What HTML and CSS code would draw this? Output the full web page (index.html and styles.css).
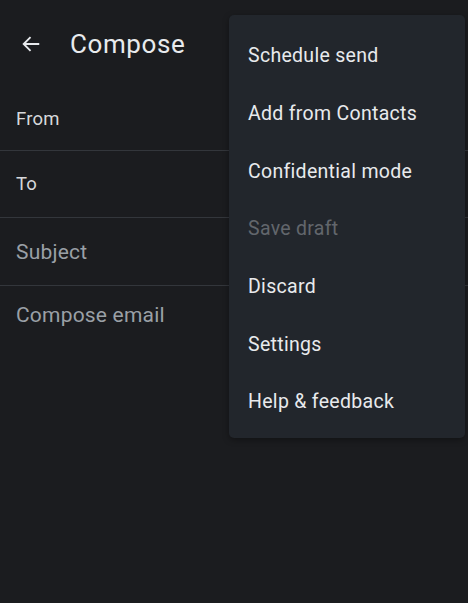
FILE: index.html
```html
<!DOCTYPE html>
<html>
<head>
<meta charset="utf-8">
<link rel="stylesheet" href="styles.css">
</head>
<body>
<div class="screen">
  <header class="topbar">
    <svg class="back" width="22" height="22" viewBox="0 0 24 24"><path d="M21 12H4M11.5 4.5L4 12l7.5 7.5" fill="none" stroke="#e8eaed" stroke-width="2"/></svg>
    <h1 class="title">Compose</h1>
  </header>
  <div class="field from"><span class="label">From</span></div>
  <div class="field to"><span class="label">To</span></div>
  <div class="field subject"><span class="label dim">Subject</span></div>
  <div class="body"><span class="label dim">Compose email</span></div>

  <ul class="menu">
    <li class="item">Schedule send</li>
    <li class="item">Add from Contacts</li>
    <li class="item">Confidential mode</li>
    <li class="item disabled">Save draft</li>
    <li class="item">Discard</li>
    <li class="item">Settings</li>
    <li class="item">Help &amp; feedback</li>
  </ul>
</div>
</body>
</html>
```
FILE: styles.css
```css
* { box-sizing: border-box; }
html, body { margin: 0; padding: 0; background: #1b1c1f; }
body { font-family: Roboto, "Noto Sans", sans-serif; color: #e8eaed; }
.screen { position: relative; width: 468px; height: 603px; overflow: hidden; }
.topbar { height: 88px; display: flex; align-items: center; padding-left: 20px; }
.back { display: block; }
.title { margin: 0 0 0 28px; font-size: 26px; font-weight: 400; letter-spacing: 0.6px; color: #e8eaed; }
.field { display: flex; align-items: center; padding-left: 16px; border-bottom: 1px solid #33363b; }
.field.from { height: 63px; }
.field.to { height: 67px; }
.field.subject { height: 68px; }
.label { font-size: 18.5px; color: #d6d8db; letter-spacing: 0.2px; }
.label.dim { color: #9aa0a6; font-size: 21px; letter-spacing: 0.2px; }
.body { padding: 17px 0 0 16px; }
.menu {
  position: absolute; left: 229px; top: 15px; width: 236px; height: 423px;
  margin: 0; padding: 12px 0 0; list-style: none;
  background: #22262c; border-radius: 5px;
  box-shadow: 0 2px 6px rgba(0,0,0,0.35);
}
.item { height: 57.7px; display: flex; align-items: center; padding-left: 19px; font-size: 19.5px; letter-spacing: 0.3px; color: #e8eaed; }
.item.disabled { color: #62666c; }
```
